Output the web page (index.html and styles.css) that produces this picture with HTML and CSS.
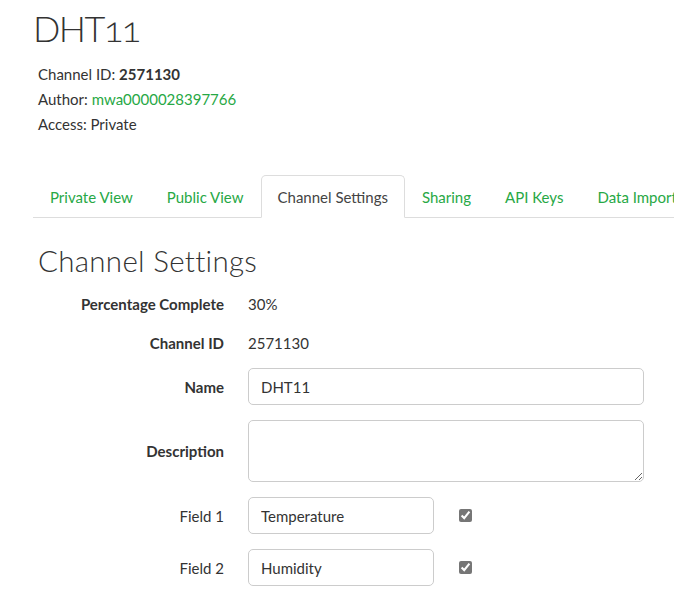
FILE: index.html
```html
<!DOCTYPE html>
<html>
<head>
<meta charset="utf-8">
<link rel="stylesheet" href="styles.css">
</head>
<body>
<div class="page">
  <h1 class="title">DHT11</h1>
  <div class="meta">
    <div class="meta-line">Channel ID: <strong>2571130</strong></div>
    <div class="meta-line">Author: <a class="link" href="#">mwa0000028397766</a></div>
    <div class="meta-line">Access: Private</div>
  </div>

  <ul class="tabs">
    <li class="tab"><a href="#">Private View</a></li>
    <li class="tab"><a href="#">Public View</a></li>
    <li class="tab active"><a href="#">Channel Settings</a></li>
    <li class="tab"><a href="#">Sharing</a></li>
    <li class="tab"><a href="#">API Keys</a></li>
    <li class="tab"><a href="#">Data Import / Export</a></li>
  </ul>

  <h2 class="section-title">Channel Settings</h2>

  <form class="settings">
    <div class="row static">
      <label class="label">Percentage Complete</label>
      <div class="value">30%</div>
    </div>
    <div class="row static last-static">
      <label class="label">Channel ID</label>
      <div class="value">2571130</div>
    </div>
    <div class="row">
      <label class="label">Name</label>
      <input class="input wide" type="text" value="DHT11">
    </div>
    <div class="row">
      <label class="label">Description</label>
      <textarea class="input wide area"></textarea>
    </div>
    <div class="row field">
      <label class="label normal">Field 1</label>
      <div class="field-controls">
        <input class="input narrow" type="text" value="Temperature">
        <input class="check" type="checkbox" checked>
      </div>
    </div>
    <div class="row field">
      <label class="label normal">Field 2</label>
      <div class="field-controls">
        <input class="input narrow" type="text" value="Humidity">
        <input class="check" type="checkbox" checked>
      </div>
    </div>
  </form>
</div>
</body>
</html>
```

FILE: styles.css
```css
html, body {
  margin: 0;
  padding: 0;
  background: #fff;
  overflow: hidden;
}
body {
  font-family: "Lato", "Liberation Sans", sans-serif;
  font-size: 15px;
  color: #333;
}
.page {
  padding: 0 0 0 33px;
}
.title {
  font-family: "Lato", sans-serif;
  font-weight: 300;
  font-size: 36px;
  letter-spacing: -1.5px;
  line-height: 44px;
  margin: 6px 0 0 0;
  padding: 0;
  color: #333;
  font-variant-numeric: oldstyle-nums;
}
.meta {
  margin: 12px 0 0 5px;
}
.meta-line {
  line-height: 25px;
}
.link {
  color: #27a845;
  text-decoration: none;
}
.tabs {
  list-style: none;
  margin: 38px 0 0 0;
  padding: 0;
  display: flex;
  white-space: nowrap;
  border-bottom: 1px solid #ddd;
}
.tab {
  margin-right: 0;
  margin-bottom: -1px;
}
.tab a {
  display: block;
  padding: 11px 16px 10px;
  line-height: 20px;
  color: #27a845;
  text-decoration: none;
  border: 1px solid transparent;
  border-radius: 5px 5px 0 0;
}
.tab.active a {
  color: #444;
  border-color: #ddd;
  border-bottom-color: #fff;
  background: #fff;
}
.section-title {
  font-family: "Lato", sans-serif;
  font-weight: 300;
  font-size: 29.5px;
  letter-spacing: 0.3px;
  line-height: 36px;
  margin: 25px 0 0 5px;
  color: #333;
}
.settings {
  margin-top: 13px;
  display: flex;
  flex-direction: column;
  gap: 15px;
}
.row {
  display: grid;
  grid-template-columns: 191px 1fr;
  column-gap: 24px;
  align-items: center;
}
.row.static {
  line-height: 24px;
}
.row.last-static {
  margin-bottom: -2px;
}
.label {
  text-align: right;
  font-weight: 700;
}
.label.normal {
  font-weight: 400;
}
.input {
  font-family: "Lato", "Liberation Sans", sans-serif;
  font-size: 15px;
  color: #333;
  box-sizing: border-box;
  height: 37px;
  border: 1px solid #ccc;
  border-radius: 5px;
  padding: 0 12px;
  margin: 0;
  outline: none;
  background: #fff;
}
.input.wide {
  width: 396px;
}
.input.area {
  height: 62px;
  resize: vertical;
  display: block;
}
.input.narrow {
  width: 186px;
}
.field-controls {
  display: flex;
  align-items: center;
  gap: 21px;
}
.check {
  margin: 0 0 0 4px;
  width: 13px;
  height: 13px;
  accent-color: #767676;
}
```
